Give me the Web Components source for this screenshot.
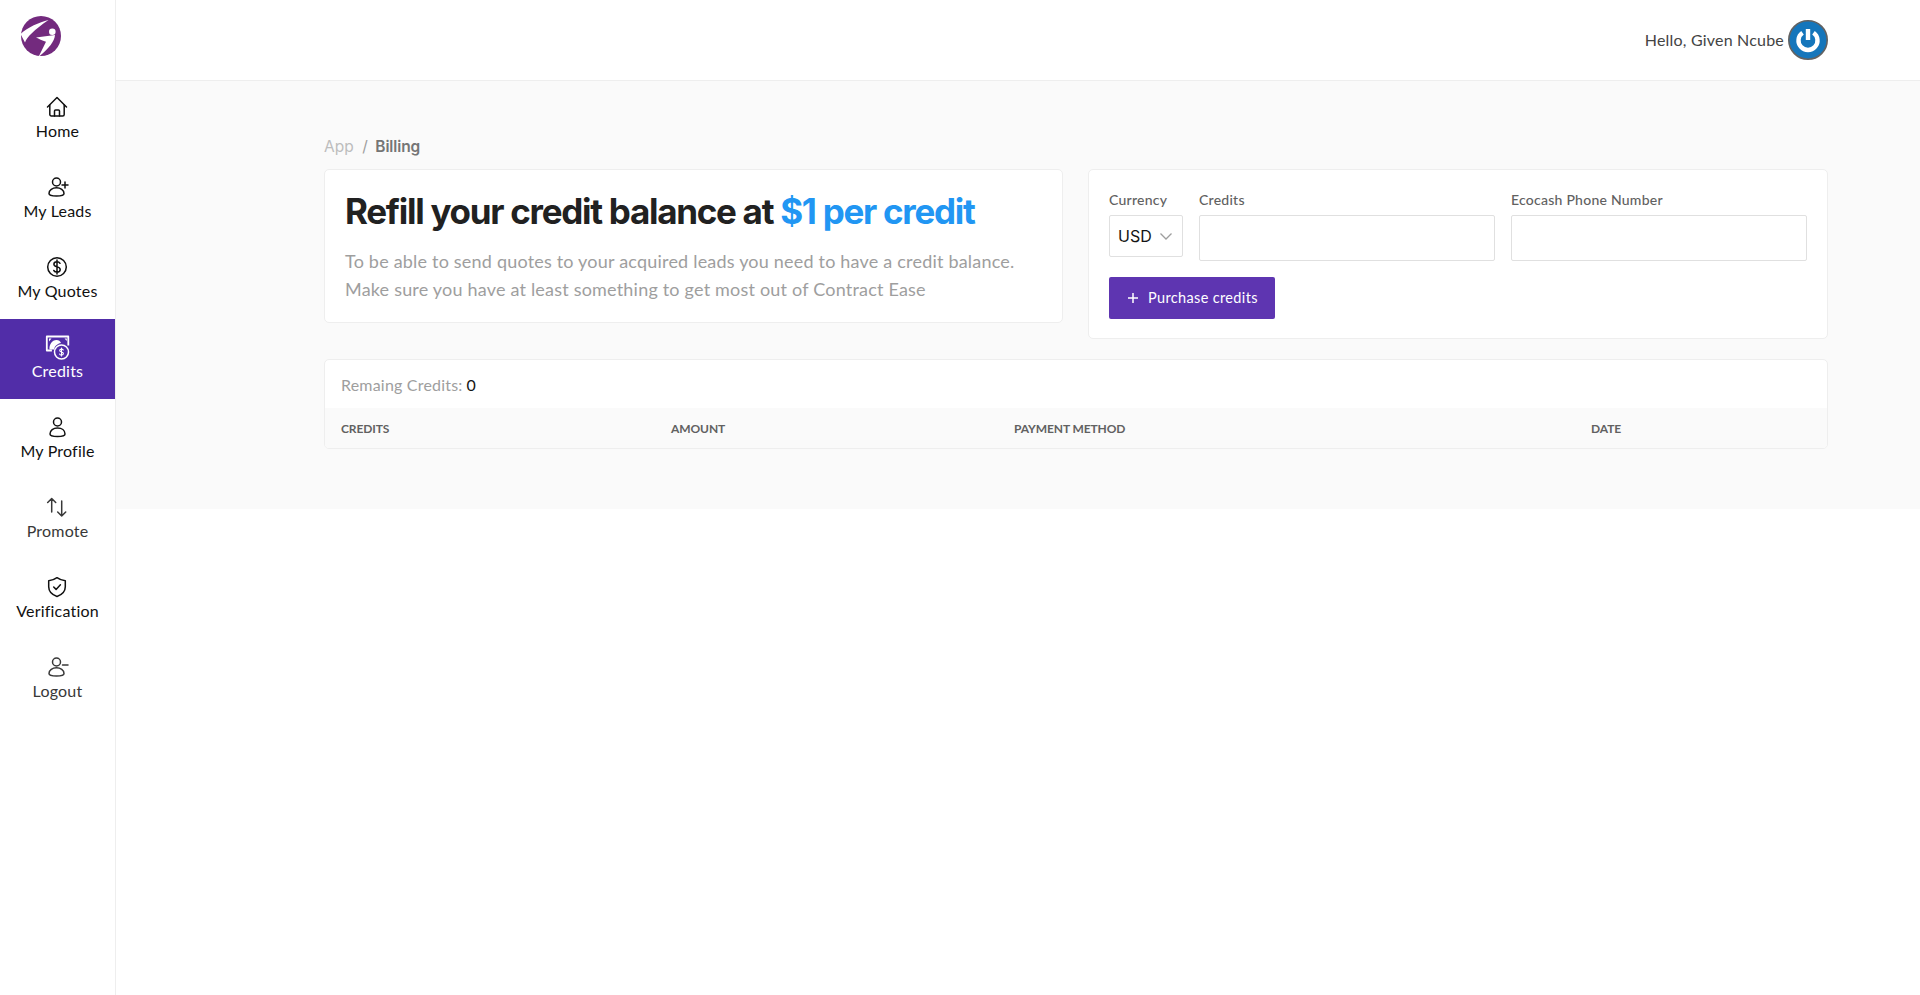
<!DOCTYPE html>
<html><head><meta charset="utf-8"><style>
html,body{margin:0;padding:0;background:#fff;font-family:Lato,"Liberation Sans",sans-serif}
</style></head><body>
<app-shell>
<side-bar slot="side">
<nav-item label="Home" icon="home"></nav-item>
<nav-item label="My Leads" icon="leads"></nav-item>
<nav-item label="My Quotes" icon="quotes"></nav-item>
<nav-item label="Credits" icon="credits" active></nav-item>
<nav-item label="My Profile" icon="profile"></nav-item>
<nav-item label="Promote" icon="promote" soft></nav-item>
<nav-item label="Verification" icon="verify"></nav-item>
<nav-item label="Logout" icon="logout" soft></nav-item>
</side-bar>
<top-bar slot="top"></top-bar>
<billing-page slot="main"></billing-page>
</app-shell>
<script>
const FONT='Lato,"Liberation Sans",sans-serif';
const HEAD='Inter,"Liberation Sans",sans-serif';
class AppShell extends HTMLElement{constructor(){super();this.attachShadow({mode:'open'}).innerHTML=`<style>
:host{display:grid;grid-template-columns:116px 1fr;grid-template-rows:81px 428px 1fr;width:1920px;height:995px;overflow:hidden}
.s{grid-row:1/4;display:block}
.m{background:#fafafa;display:block}
</style><div class="s"><slot name="side"></slot></div><div><slot name="top"></slot></div><div class="m"><slot name="main"></slot></div>`}}
customElements.define('app-shell',AppShell);
class SideBar extends HTMLElement{constructor(){super();this.attachShadow({mode:'open'}).innerHTML=`<style>
:host{display:flex;flex-direction:column;height:995px;box-sizing:border-box;border-right:1px solid #eeeeee;background:#fff}
.logo{height:79px;padding:16px 0 0 20px;box-sizing:border-box}
svg{display:block}
</style><div class="logo"><svg width="42" height="40" viewBox="0 0 42 40">
<circle cx="21" cy="20" r="20" fill="#732a7e"/>
<path d="M28.500 4C19 6.500 8 11 .5 18L5 26.500C7 21 14 14 28.500 4Z" fill="#fff"/>
<path d="M16 21.500L35 19C34.500 26 28 33 18.500 41L26 25.700C22 24.300 19 23 16 21.500Z" fill="#fff"/>
<circle cx="32.300" cy="15.700" r="3.300" fill="#fff"/>
</svg></div><slot></slot>`}}
customElements.define('side-bar',SideBar);
const ICONS={
home:'<path d="M1.500 12 11 2.500l9.500 9.500"/><path d="M3.800 10v9.500A1.500 1.500 0 0 0 5.300 21h11.400a1.500 1.500 0 0 0 1.500-1.500V10"/><path d="M8.500 21v-5a1 1 0 0 1 1-1h3a1 1 0 0 1 1 1v5"/>',
leads:'<circle cx="10.500" cy="7" r="4"/><path d="M3 18.500c0-3.500 3.500-5.700 7.500-5.700s7.500 2.200 7.500 5.700c0 1.700-3.500 2.500-7.500 2.500S3 20.200 3 18.500z"/><path d="M19 7v6M16 10h6"/>',
quotes:'<circle cx="11" cy="12" r="9.300"/><path d="M14 8.300c-.6-1-1.700-1.500-3-1.500-1.800 0-3.100 1-3.100 2.500 0 3.400 6.300 1.700 6.300 5.200 0 1.500-1.400 2.600-3.200 2.600-1.400 0-2.600-.6-3.200-1.600M11 5v14"/>',
profile:'<circle cx="11.500" cy="7" r="4"/><path d="M4 19c0-3.700 3.300-6 7.500-6s7.500 2.300 7.500 6c0 1.500-3 2.500-7.500 2.500S4 20.500 4 19z"/>',
promote:'<path d="M5.700 17V3.500M1.700 7.500l4-4 4 4"/><path d="M15.700 6v15M11.700 17l4 4 4-4"/>',
verify:'<path d="M11 2.700c2.300 1.700 5 2.700 8.300 3v6.100c0 4.600-3.400 8-8.300 9.700-4.900-1.700-8.300-5.100-8.300-9.700V5.700c3.300-.3 6-1.300 8.300-3z"/><path d="M7.700 12l2.400 2.400 4.300-4.600"/>',
logout:'<circle cx="10.500" cy="7" r="4"/><path d="M3 18.500c0-3.500 3.500-5.700 7.500-5.700s7.500 2.200 7.500 5.700c0 1.700-3.500 2.500-7.500 2.500S3 20.200 3 18.500z"/><path d="M16.500 10H22"/>',
credits:'<path d="M5 15.500H.8V1.500h21.500v8" stroke-width="1.800" stroke-linecap="square"/><path fill="#fff" stroke="none" d="M3 3.500h2.500L3 6.500zM18.500 3.500h2.300v2.500zM3.500 14.500C3 10 6 5 10.500 5c2.200 0 3.800 1.300 4.500 3-3.500.7-6.500 3-6.800 6.500z"/><circle cx="15.500" cy="17" r="7" fill="#512da8" stroke-width="1.500"/><path stroke-width="1.100" d="M17.300 15c-.4-.6-1-.9-1.800-.9-1 0-1.800.6-1.800 1.400 0 2 3.700 1 3.700 3.100 0 .9-.8 1.500-1.900 1.500-.8 0-1.600-.3-1.900-1M15.500 13v8"/>'
};
class NavItem extends HTMLElement{connectedCallback(){
const a=this.hasAttribute('active'),s=this.hasAttribute('soft');
this.attachShadow({mode:'open'}).innerHTML=`<style>
:host{display:flex;flex-direction:column;align-items:center;height:80px;box-sizing:border-box;padding-top:16px;
font:400 16px/20px ${FONT};letter-spacing:.2px;color:${a?'#fff':s?'#383838':'#111'};background:${a?'#512da8':'transparent'}}
svg{display:block;width:24px;height:24px;fill:none;stroke:currentColor;stroke-width:1.500;stroke-linecap:round;stroke-linejoin:round;margin-bottom:2px;overflow:visible}
</style><svg viewBox="0 0 24 24">${ICONS[this.getAttribute('icon')]}</svg><span>${this.getAttribute('label')}</span>`}}
customElements.define('nav-item',NavItem);
class TopBar extends HTMLElement{constructor(){super();this.attachShadow({mode:'open'}).innerHTML=`<style>
:host{display:flex;align-items:center;justify-content:flex-end;gap:4px;height:81px;box-sizing:border-box;border-bottom:1px solid #eee;padding:0 92px 0 0;font:400 16px/24px ${FONT};letter-spacing:.2px;color:#444}
svg{display:block}
</style><span>Hello, Given Ncube</span><svg width="40" height="40" viewBox="0 0 40 40">
<circle cx="20" cy="20" r="19.200" fill="#1576bb" stroke="#626262" stroke-width="1.600"/>
<path d="M14.500 12.700a9.500 9.500 0 1 0 11 0" fill="none" stroke="#fff" stroke-width="4.400" stroke-linecap="butt"/>
<path d="M20 9v11" stroke="#fff" stroke-width="4.400"/>
</svg>`}}
customElements.define('top-bar',TopBar);
class FormField extends HTMLElement{connectedCallback(){
const sel=this.hasAttribute('select');
this.attachShadow({mode:'open'}).innerHTML=`<style>
:host{display:flex;flex-direction:column;gap:5px;min-width:0;font:500 14px/20px ${FONT};letter-spacing:.25px;color:#616161}
.b{box-sizing:border-box;border:1px solid #e0e0e0;border-radius:2px;background:#fff;height:46px}
.s{height:42px;display:flex;align-items:center;padding:0 8px;gap:7px;color:#141414;font:400 16px/20px ${HEAD};letter-spacing:0}
svg{width:14px;height:14px;fill:none;stroke:#9e9e9e;stroke-width:1.300}
</style><div>${this.getAttribute('label')}</div>`+(sel?`<div class="b s"><span>USD</span><svg viewBox="0 0 14 14"><path d="M1.500 4.500 7 10l5.500-5.500"/></svg></div>`:`<div class="b"></div>`)}}
customElements.define('form-field',FormField);
class BillingPage extends HTMLElement{constructor(){super();this.attachShadow({mode:'open'}).innerHTML=`<style>
:host{display:block;box-sizing:border-box;height:428px;padding:54px 92px 0 208px;font-family:${FONT}}
.crumb{display:flex;gap:8.500px;font:400 15.500px/23px ${HEAD};height:34px;color:#bdbdbd}
.crumb i{font-style:normal;color:#9e9e9e}
.crumb b{font-weight:600;color:#757575;margin-left:-1px;letter-spacing:-.1px}
.top{display:grid;grid-template-columns:739px 740px;gap:25px;align-items:start}
.card{background:#fff;border:1px solid #eeeeee;border-radius:5px;box-sizing:border-box}
.l{height:154px;padding:19px 20px}
h1{margin:0 0 14px;font:700 35px/44px ${HEAD};letter-spacing:-1.280px;color:#212121;white-space:nowrap}
h1 span{color:#2196f3}
p{margin:0;font:400 18px/28px ${FONT};letter-spacing:.2px;color:#9e9e9e;white-space:nowrap}
.r{height:170px;padding:20px}
.row{display:grid;grid-template-columns:74px 296px 296px;gap:16px}
button{margin-top:16px;display:flex;align-items:center;gap:10px;height:42px;width:166px;box-sizing:border-box;padding:0 19px;border:0;border-radius:2px;background:#5e35b1;color:#fff;font:400 14.500px/20px ${FONT};letter-spacing:.35px;white-space:nowrap}
button svg{width:10px;height:10px;stroke:#fff;stroke-width:1.500;fill:none;flex:none}
.t{margin-top:20px;height:90px;overflow:hidden}
.rem{height:48px;padding:2px 16px 0;box-sizing:border-box;display:flex;align-items:center;gap:4px;font:400 16px/24px ${FONT};letter-spacing:.2px;color:#9e9e9e}
.rem b{font-weight:400;color:#141414}
.head{display:grid;grid-template-columns:330px 343px 577px 1fr;padding:0 16px;height:41px;align-items:center;background:#fafafa;font:700 12px/16px ${FONT};color:#616161;letter-spacing:-.1px}
</style>
<div class="crumb"><span>App</span><i>/</i><b>Billing</b></div>
<div class="top">
<div class="card l"><h1>Refill your credit balance at <span>$1 per credit</span></h1>
<p>To be able to send quotes to your acquired leads you need to have a credit balance.<br>Make sure you have at least something to get most out of Contract Ease</p></div>
<div class="card r"><div class="row"><form-field label="Currency" select></form-field><form-field label="Credits"></form-field><form-field label="Ecocash Phone Number"></form-field></div>
<button><svg viewBox="0 0 10 10"><path d="M5 0v10M0 5h10"/></svg><span>Purchase credits</span></button></div>
</div>
<div class="card t"><div class="rem"><span>Remaing Credits:</span><b>0</b></div>
<div class="head"><span>CREDITS</span><span>AMOUNT</span><span>PAYMENT METHOD</span><span>DATE</span></div></div>`}}
customElements.define('billing-page',BillingPage);
</script></body></html>
